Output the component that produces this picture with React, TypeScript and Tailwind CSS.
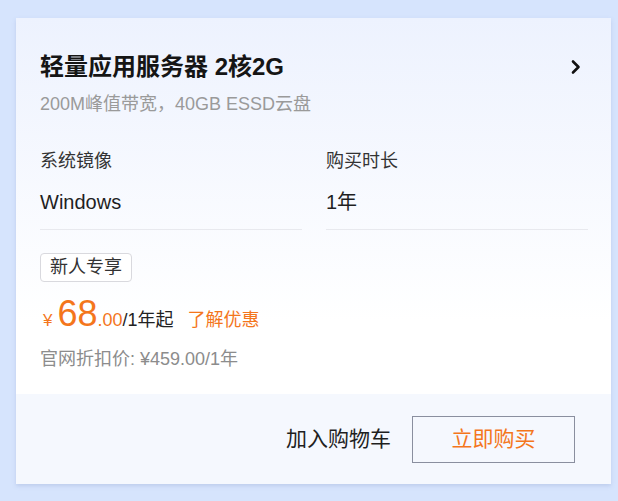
import React from "react";

const font = { fontFamily: '"Liberation Sans", Arial, "Noto Sans CJK SC", sans-serif' };

export default function App() {
  return (
    <div className="w-[618px] h-[501px] bg-[#d6e4fd] pt-[18px] pl-[16px]" style={font}>
      <div className="w-[595px] h-[466px] flex flex-col bg-gradient-to-b from-[#edf2fe] to-white to-[65%] shadow-[0_2px_4px_rgba(120,140,190,0.25)]">
        <div className="flex-1 pl-[24px] pr-[23px] pt-[33px]">
          <div className="flex items-center justify-between h-[32px]">
            <div className="text-[24px] leading-[32px] font-bold text-[#151515]">轻量应用服务器 2核2G</div>
            <svg width="12" height="16" viewBox="0 0 12 16" className="mr-[6px]">
              <polyline points="3,2.5 8.5,8 3,13.5" fill="none" stroke="#111" strokeWidth="2.6" strokeLinecap="round" strokeLinejoin="round" />
            </svg>
          </div>
          <div className="mt-[8px] text-[18px] leading-[26px] text-[#9a9a9a]">200M峰值带宽，40GB ESSD云盘</div>
          <div className="mt-[31px] grid grid-cols-2 gap-[24px]">
            <div className="border-b border-[#e8e9ee] pb-[13px]">
              <div className="text-[18px] leading-[26px] text-[#333]">系统镜像</div>
              <div className="mt-[14px] text-[20px] leading-[28px] text-[#1f1f1f]">Windows</div>
            </div>
            <div className="border-b border-[#e8e9ee] pb-[13px]">
              <div className="text-[18px] leading-[26px] text-[#333]">购买时长</div>
              <div className="mt-[14px] text-[20px] leading-[28px] text-[#1f1f1f]">1年</div>
            </div>
          </div>
          <div className="mt-[23px] flex">
            <div className="h-[29px] px-[9px] border border-[#d9d9de] rounded-[4px] bg-white text-[18px] leading-[27px] text-[#333]">新人专享</div>
          </div>
          <div className="mt-[10px] flex items-baseline h-[44px] leading-[44px]">
            <span className="ml-[3px] mr-[5px] text-[17px] text-[#f4761c]">¥</span>
            <span className="text-[36px] text-[#f4761c]">68</span>
            <span className="text-[18px] text-[#f4761c]">.00</span>
            <span className="text-[18px] text-[#222]">/1年起</span>
            <span className="ml-[14px] text-[18px] text-[#f4761c]">了解优惠</span>
          </div>
          <div className="mt-[10px] text-[18px] leading-[26px] text-[#8c8c8c]">官网折扣价: ¥459.00/1年</div>
        </div>
        <div className="h-[90px] bg-[#f5f8fe] flex items-center justify-end pr-[36px]">
          <span className="text-[21px] text-[#1f1f1f] mr-[21px]">加入购物车</span>
          <div className="w-[163px] h-[47px] border border-[#8a8f9f] flex items-center justify-center text-[21px] text-[#f4761c]">立即购买</div>
        </div>
      </div>
    </div>
  );
}
